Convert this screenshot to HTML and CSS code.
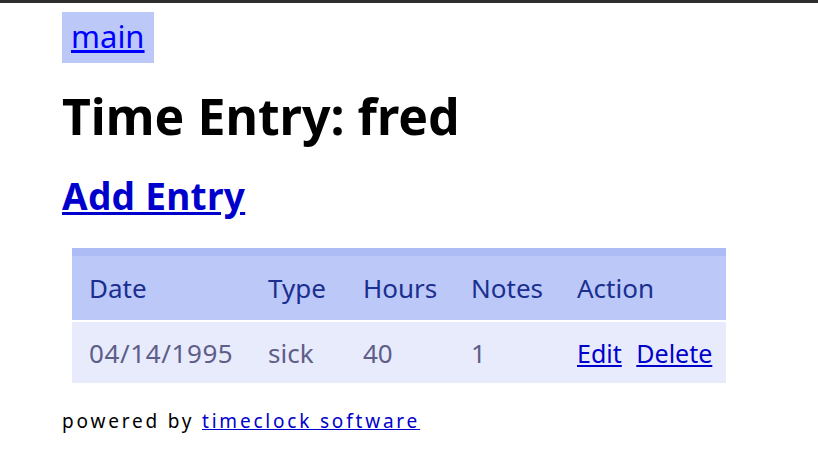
FILE: index.html
```html
<!DOCTYPE html>
<html>
<head>
<meta charset="utf-8">
<link rel="stylesheet" href="styles.css">
</head>
<body>
<div class="topbar"></div>
<div class="page">
  <div class="nav"><a href="#">main</a></div>
  <h1 class="title">Time Entry: fred</h1>
  <h2 class="add"><a href="#">Add Entry</a></h2>
  <table class="entries">
    <thead>
      <tr class="band"><td colspan="5"></td></tr>
      <tr class="head">
        <th class="c-date">Date</th>
        <th class="c-type">Type</th>
        <th class="c-hours">Hours</th>
        <th class="c-notes">Notes</th>
        <th class="c-action">Action</th>
      </tr>
    </thead>
    <tbody>
      <tr class="row">
        <td class="date">04/14/1995</td>
        <td>sick</td>
        <td>40</td>
        <td>1</td>
        <td class="actions"><a href="#">Edit</a> <a href="#">Delete</a></td>
      </tr>
    </tbody>
  </table>
  <p class="footer">powered by <a href="#">timeclock software</a></p>
</div>
</body>
</html>
```

FILE: styles.css
```css
html, body {
  margin: 0;
  padding: 0;
  background: #ffffff;
  font-family: "Noto Sans", "Open Sans", sans-serif;
}
.topbar {
  height: 3px;
  background: #2e2e2e;
}
.page {
  padding-left: 62px;
}
.nav {
  display: inline-block;
  margin-top: 9px;
  background: #bcc8f8;
  padding: 3px 9px 6px 9px;
  font-size: 31px;
  line-height: 42px;
}
.nav a {
  color: #0000ff;
}
.title {
  margin: 20px 0 0 0;
  font-size: 50px;
  line-height: 66px;
  font-weight: bold;
  color: #000000;
}
.add {
  margin: 22px 0 0 0;
  font-size: 37px;
  line-height: 50px;
  font-weight: bold;
  letter-spacing: 0.3px;
}
.add a {
  color: #0000cc;
}
.entries {
  margin: 27px 0 0 10px;
  border-collapse: collapse;
  width: 654px;
  font-size: 26px;
}
.band td {
  height: 8px;
  padding: 0;
  background: #adbcf5;
}
.head th {
  background: #bcc8f8;
  color: #1a2f8f;
  font-weight: normal;
  text-align: left;
  height: 64px;
  padding: 0 0 0 17px;
  border-bottom: 2px solid #ffffff;
}
.row td {
  background: #e8ebfc;
  color: #5e5e88;
  height: 61px;
  padding: 0 0 0 17px;
}
.row td.date {
  letter-spacing: 0.6px;
}
.c-date { width: 162px; }
.c-type { width: 78px; }
.c-hours { width: 91px; }
.c-notes { width: 89px; }
.actions {
  font-size: 25px;
}
.actions a {
  color: #0000cc;
  margin-right: 8px;
}
.footer {
  margin: 25px 0 0 0;
  font-size: 19px;
  letter-spacing: 2.8px;
  color: #000000;
}
.footer a {
  color: #0000cc;
}
```
